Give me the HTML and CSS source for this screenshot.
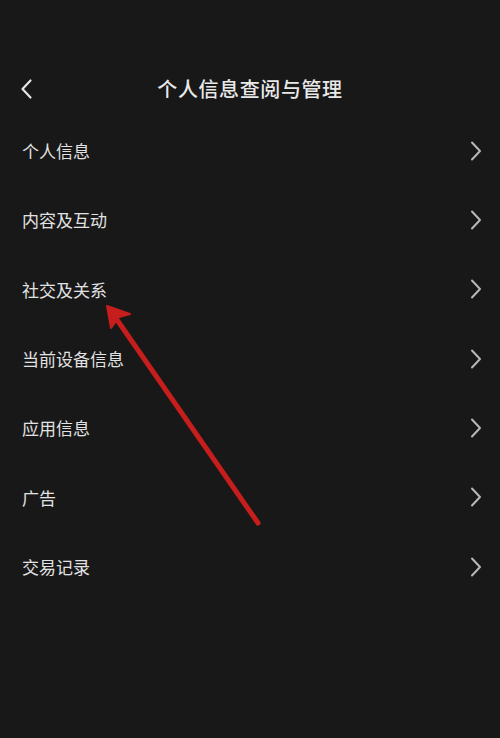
FILE: index.html
```html
<!DOCTYPE html>
<html lang="zh-CN">
<head>
<meta charset="utf-8">
<link rel="stylesheet" href="styles.css">
</head>
<body>
<div class="screen">
  <header class="topbar">
    <svg class="back" width="14" height="22" viewBox="0 0 14 22"><path d="M10.5 2.5 L2.5 11 L10.5 19.5" fill="none" stroke="#e4e4e4" stroke-width="2.2" stroke-linecap="round" stroke-linejoin="round"/></svg>
    <h1 class="title">个人信息查阅与管理</h1>
  </header>
  <ul class="menu">
    <li class="item"><span>个人信息</span><svg class="chev" width="12" height="20" viewBox="0 0 12 20"><path d="M2 1.5 L10 10 L2 18.5" fill="none" stroke="#b8b8b8" stroke-width="2" stroke-linecap="round" stroke-linejoin="round"/></svg></li>
    <li class="item"><span>内容及互动</span><svg class="chev" width="12" height="20" viewBox="0 0 12 20"><path d="M2 1.5 L10 10 L2 18.5" fill="none" stroke="#b8b8b8" stroke-width="2" stroke-linecap="round" stroke-linejoin="round"/></svg></li>
    <li class="item"><span>社交及关系</span><svg class="chev" width="12" height="20" viewBox="0 0 12 20"><path d="M2 1.5 L10 10 L2 18.5" fill="none" stroke="#b8b8b8" stroke-width="2" stroke-linecap="round" stroke-linejoin="round"/></svg></li>
    <li class="item"><span>当前设备信息</span><svg class="chev" width="12" height="20" viewBox="0 0 12 20"><path d="M2 1.5 L10 10 L2 18.5" fill="none" stroke="#b8b8b8" stroke-width="2" stroke-linecap="round" stroke-linejoin="round"/></svg></li>
    <li class="item"><span>应用信息</span><svg class="chev" width="12" height="20" viewBox="0 0 12 20"><path d="M2 1.5 L10 10 L2 18.5" fill="none" stroke="#b8b8b8" stroke-width="2" stroke-linecap="round" stroke-linejoin="round"/></svg></li>
    <li class="item"><span>广告</span><svg class="chev" width="12" height="20" viewBox="0 0 12 20"><path d="M2 1.5 L10 10 L2 18.5" fill="none" stroke="#b8b8b8" stroke-width="2" stroke-linecap="round" stroke-linejoin="round"/></svg></li>
    <li class="item"><span>交易记录</span><svg class="chev" width="12" height="20" viewBox="0 0 12 20"><path d="M2 1.5 L10 10 L2 18.5" fill="none" stroke="#b8b8b8" stroke-width="2" stroke-linecap="round" stroke-linejoin="round"/></svg></li>
  </ul>
  <svg class="annotation" width="500" height="738" viewBox="0 0 500 738">
    <line x1="258" y1="523" x2="113" y2="314" stroke="#c61d1d" stroke-width="5" stroke-linecap="round"/>
    <path d="M107 306 L130 314 L119 317 L111 328 Z" fill="#c61d1d" stroke="#c61d1d" stroke-width="2" stroke-linejoin="round"/>
  </svg>
</div>
</body>
</html>
```
FILE: styles.css
```css
html, body {
  margin: 0;
  padding: 0;
  background: #181818;
}
.screen {
  position: relative;
  width: 500px;
  height: 738px;
  background: #181818;
  color: #e4e4e4;
  font-family: "Noto Sans CJK SC", "Noto Sans", sans-serif;
  overflow: hidden;
}
.topbar {
  position: relative;
  height: 56px;
  margin-top: 60px;
  display: flex;
  align-items: center;
  justify-content: center;
}
.back {
  position: absolute;
  left: 20px;
  top: 18px;
}
.title {
  margin: 0;
  font-size: 20px;
  font-weight: 500;
  letter-spacing: 0.6px;
  color: #e8e8e8;
}
.menu {
  list-style: none;
  margin: 0;
  padding: 0;
}
.item {
  height: 69.33px;
  display: flex;
  align-items: center;
  justify-content: space-between;
  padding: 0 18px 0 22px;
  font-size: 17px;
  color: #e2e2e2;
}
.chev {
  display: block;
}
.annotation {
  position: absolute;
  left: 0;
  top: 0;
  pointer-events: none;
}
```
